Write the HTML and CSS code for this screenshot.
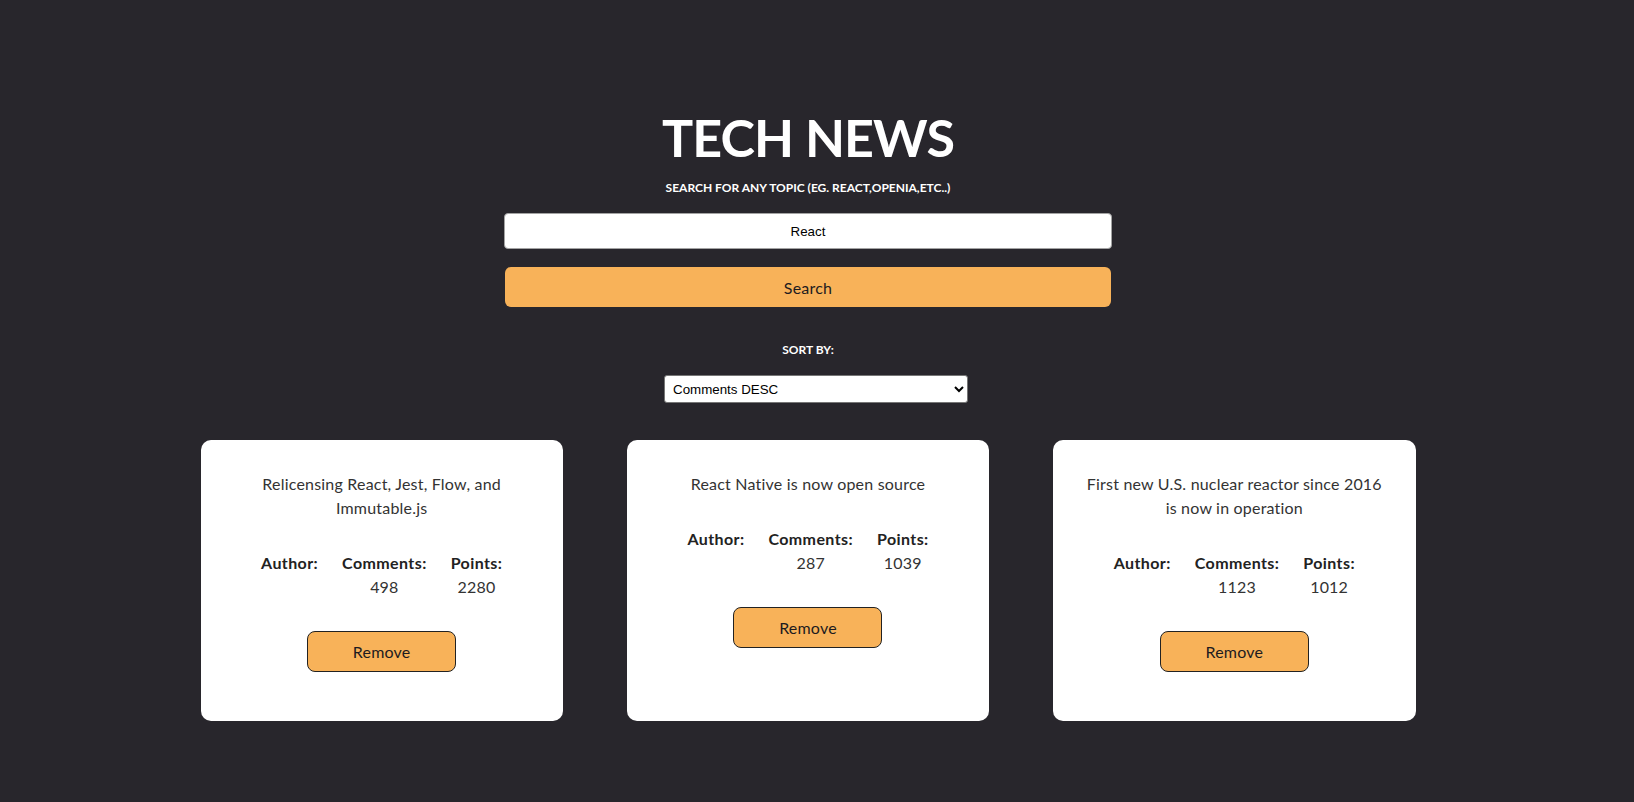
FILE: index.html
```html
<!DOCTYPE html>
<html lang="en">
<head>
<meta charset="utf-8">
<title>Tech News</title>
<link rel="stylesheet" href="styles.css">
</head>
<body>
<div class="app">
  <header class="header">
    <h1 class="title">TECH NEWS</h1>
    <p class="subtitle">SEARCH FOR ANY TOPIC (EG. REACT,OPENIA,ETC..)</p>
    <form class="search-form">
      <input class="search-input" type="text" value="React">
      <button class="search-button" type="button">Search</button>
    </form>
    <p class="sort-label">SORT BY:</p>
    <select class="sort-select">
      <option>Comments DESC</option>
      <option>Comments ASC</option>
      <option>Points DESC</option>
      <option>Points ASC</option>
    </select>
  </header>
  <main class="cards">
    <article class="card">
      <p class="card-title">Relicensing React, Jest, Flow, and Immutable.js</p>
      <div class="stats">
        <div class="stat"><span class="stat-label">Author:</span><span class="stat-value"></span></div>
        <div class="stat"><span class="stat-label">Comments:</span><span class="stat-value">498</span></div>
        <div class="stat"><span class="stat-label">Points:</span><span class="stat-value">2280</span></div>
      </div>
      <button class="remove-button" type="button">Remove</button>
    </article>
    <article class="card">
      <p class="card-title">React Native is now open source</p>
      <div class="stats">
        <div class="stat"><span class="stat-label">Author:</span><span class="stat-value"></span></div>
        <div class="stat"><span class="stat-label">Comments:</span><span class="stat-value">287</span></div>
        <div class="stat"><span class="stat-label">Points:</span><span class="stat-value">1039</span></div>
      </div>
      <button class="remove-button" type="button">Remove</button>
    </article>
    <article class="card">
      <p class="card-title">First new U.S. nuclear reactor since 2016 is now in operation</p>
      <div class="stats">
        <div class="stat"><span class="stat-label">Author:</span><span class="stat-value"></span></div>
        <div class="stat"><span class="stat-label">Comments:</span><span class="stat-value">1123</span></div>
        <div class="stat"><span class="stat-label">Points:</span><span class="stat-value">1012</span></div>
      </div>
      <button class="remove-button" type="button">Remove</button>
    </article>
  </main>
</div>
</body>
</html>
```

FILE: styles.css
```css
html, body {
  margin: 0;
  padding: 0;
  background: #28262c;
}

body {
  font-family: Lato, "Open Sans", sans-serif;
  color: #ffffff;
  min-height: 802px;
}

.app {
  padding: 106px 18px 40px 0;
  display: flex;
  flex-direction: column;
  align-items: center;
}

.header {
  display: flex;
  flex-direction: column;
  align-items: center;
}

.title {
  margin: 0;
  font-size: 52px;
  line-height: 62px;
  font-weight: 700;
  letter-spacing: -0.9px;
  color: #ffffff;
}

.subtitle {
  margin: 12px 0 0;
  font-size: 12px;
  line-height: 16px;
  font-weight: 700;
}

.search-form {
  margin: 17px 0 0;
  display: flex;
  flex-direction: column;
  align-items: center;
}

.search-input {
  box-sizing: border-box;
  width: 608px;
  height: 36px;
  border: 1px solid #a3a3a3;
  border-radius: 4px;
  background: #ffffff;
  text-align: center;
  font-family: "Liberation Sans", Arial, sans-serif;
  font-size: 13.33px;
  color: #000000;
  padding: 0 8px;
}

.search-button {
  margin-top: 18px;
  box-sizing: border-box;
  width: 606px;
  height: 40px;
  border: none;
  border-radius: 6px;
  background: #f8b259;
  font-family: Lato, "Open Sans", sans-serif;
  font-size: 16px;
  letter-spacing: 0.2px;
  color: #1d1b20;
  cursor: pointer;
}

.sort-label {
  margin: 35px 0 0;
  font-size: 12px;
  line-height: 16px;
  font-weight: 700;
}

.sort-select {
  margin: 17px 0 0 16px;
  box-sizing: border-box;
  width: 304px;
  height: 28px;
  border: 1px solid #767676;
  border-radius: 3px;
  background: #ffffff;
  font-family: "Liberation Sans", Arial, sans-serif;
  font-size: 13.33px;
  color: #000000;
  padding: 0 4px;
}

.cards {
  margin-top: 37px;
  width: 1215px;
  display: grid;
  grid-template-columns: repeat(3, 1fr);
  column-gap: 64px;
}

.card {
  background: #ffffff;
  border-radius: 10px;
  padding: 32px 32px 49px;
  display: flex;
  flex-direction: column;
  align-items: center;
  text-align: center;
  color: #333333;
}

.card-title {
  margin: 0;
  font-size: 16px;
  line-height: 24px;
  letter-spacing: 0.2px;
  color: #333333;
}

.stats {
  margin-top: 31px;
  display: flex;
  justify-content: center;
  gap: 24px;
}

.stat {
  display: flex;
  flex-direction: column;
  align-items: center;
  font-size: 16px;
  line-height: 24px;
}

.stat-label {
  font-weight: 700;
  letter-spacing: 0.4px;
  color: #222222;
}

.stat-value {
  color: #333333;
  letter-spacing: 0.2px;
  min-height: 24px;
}

.remove-button {
  margin-top: 32px;
  box-sizing: border-box;
  width: 149px;
  height: 41px;
  border: 1px solid #222222;
  border-radius: 8px;
  background: #f8b259;
  font-family: Lato, "Open Sans", sans-serif;
  font-size: 16px;
  letter-spacing: 0.2px;
  color: #1d1b20;
  cursor: pointer;
}
```
